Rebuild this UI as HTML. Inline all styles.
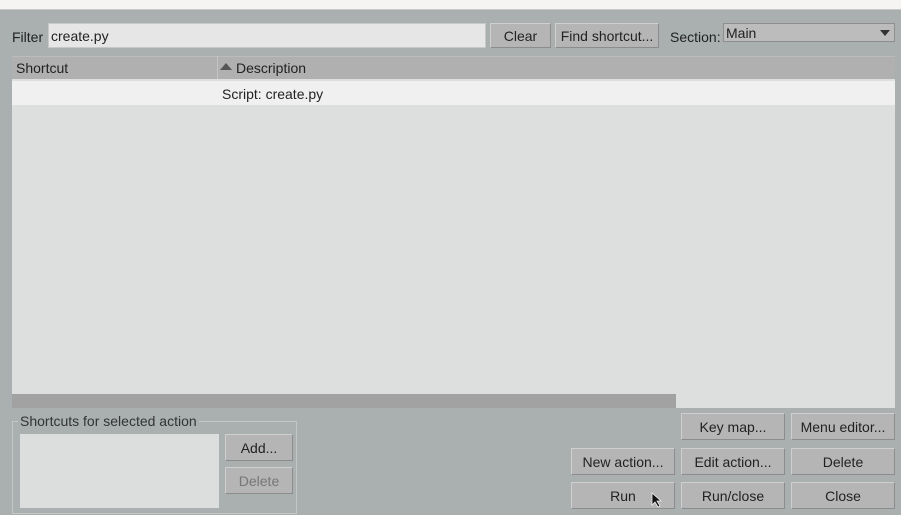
<!DOCTYPE html>
<html><head><style>
body{margin:0;width:901px;height:515px;background:#a9b0af;position:relative;overflow:hidden;font-family:"Liberation Sans",sans-serif;font-size:14px;color:#222}
.a{position:absolute;box-sizing:border-box}
.top{left:0;top:0;width:901px;height:10px;background:#f5f4f2;border-bottom:1px solid #c8c8c6}
.btn{background:#b5b5b5;border:1px solid;border-color:#cfcfcf #8c8c8c #8c8c8c #cfcfcf;text-align:center;line-height:24px}
.t{position:absolute;white-space:nowrap}
</style></head><body>
<div class="a top"></div>
<div class="t" style="left:12px;top:29px">Filter</div>
<div class="a" style="left:48px;top:23px;width:438px;height:25px;background:#e6e6e6;border:1px solid #c6c9c8;padding:4px 2px">create.py</div>
<div class="a btn" style="left:490px;top:23px;width:61px;height:25px">Clear</div>
<div class="a btn" style="left:555px;top:23px;width:104px;height:25px">Find shortcut...</div>
<div class="t" style="left:670px;top:29px">Section:</div>
<div class="a" style="left:723px;top:23px;width:172px;height:19px;background:#bcbcbc;border:1px solid #8e8e8e;padding:1px 2px;line-height:16px">Main<span style="position:absolute;right:4px;top:6px;width:0;height:0;border-left:5px solid transparent;border-right:5px solid transparent;border-top:6px solid #333"></span></div>
<div class="a" style="left:12px;top:56px;width:883px;height:338px;background:#dddfde"></div>
<div class="a" style="left:12px;top:56px;width:883px;height:23px;background:#b0b0b0;border-top:1px solid #bcbcbc"></div>
<div class="a" style="left:217px;top:56px;width:1px;height:23px;background:#c4c4c4"></div>
<div class="t" style="left:16px;top:60px">Shortcut</div>
<div class="a" style="left:220px;top:63px;width:0;height:0;border-left:6px solid transparent;border-right:6px solid transparent;border-bottom:7px solid #555"></div>
<div class="t" style="left:236px;top:60px">Description</div>
<div class="a" style="left:12px;top:81px;width:883px;height:24px;background:#f0f0f0"></div>
<div class="t" style="left:222px;top:86px">Script: create.py</div>
<div class="a" style="left:12px;top:394px;width:883px;height:14px;background:#dddfde"></div>
<div class="a" style="left:12px;top:394px;width:664px;height:14px;background:#a2a2a2"></div>
<div class="a" style="left:12px;top:421px;width:285px;height:93px;border:1px solid #c3c7c6"></div>
<div class="t" style="left:18px;top:413px;background:#a9b0af;padding:0 2px;color:#333">Shortcuts for selected action</div>
<div class="a" style="left:20px;top:434px;width:199px;height:74px;background:#dcdedd"></div>
<div class="a btn" style="left:225px;top:434px;width:68px;height:27px;line-height:26px">Add...</div>
<div class="a btn" style="left:225px;top:467px;width:68px;height:27px;line-height:26px;color:#777">Delete</div>
<div class="a btn" style="left:681px;top:413px;width:104px;height:27px;line-height:26px">Key map...</div>
<div class="a btn" style="left:791px;top:413px;width:104px;height:27px;line-height:26px">Menu editor...</div>
<div class="a btn" style="left:571px;top:448px;width:104px;height:27px;line-height:26px">New action...</div>
<div class="a btn" style="left:681px;top:448px;width:104px;height:27px;line-height:26px">Edit action...</div>
<div class="a btn" style="left:791px;top:448px;width:104px;height:27px;line-height:26px">Delete</div>
<div class="a btn" style="left:571px;top:482px;width:104px;height:27px;line-height:26px">Run</div>
<div class="a btn" style="left:681px;top:482px;width:104px;height:27px;line-height:26px">Run/close</div>
<div class="a btn" style="left:791px;top:482px;width:104px;height:27px;line-height:26px">Close</div>
<svg class="a" style="left:651px;top:492px" width="12" height="16" viewBox="0 0 12 16"><path d="M1 1 L1 13 L4 10 L7 15 L9 14 L6 9 L10 9 Z" fill="#111" stroke="#eee" stroke-width="0.8"/></svg>
</body></html>
